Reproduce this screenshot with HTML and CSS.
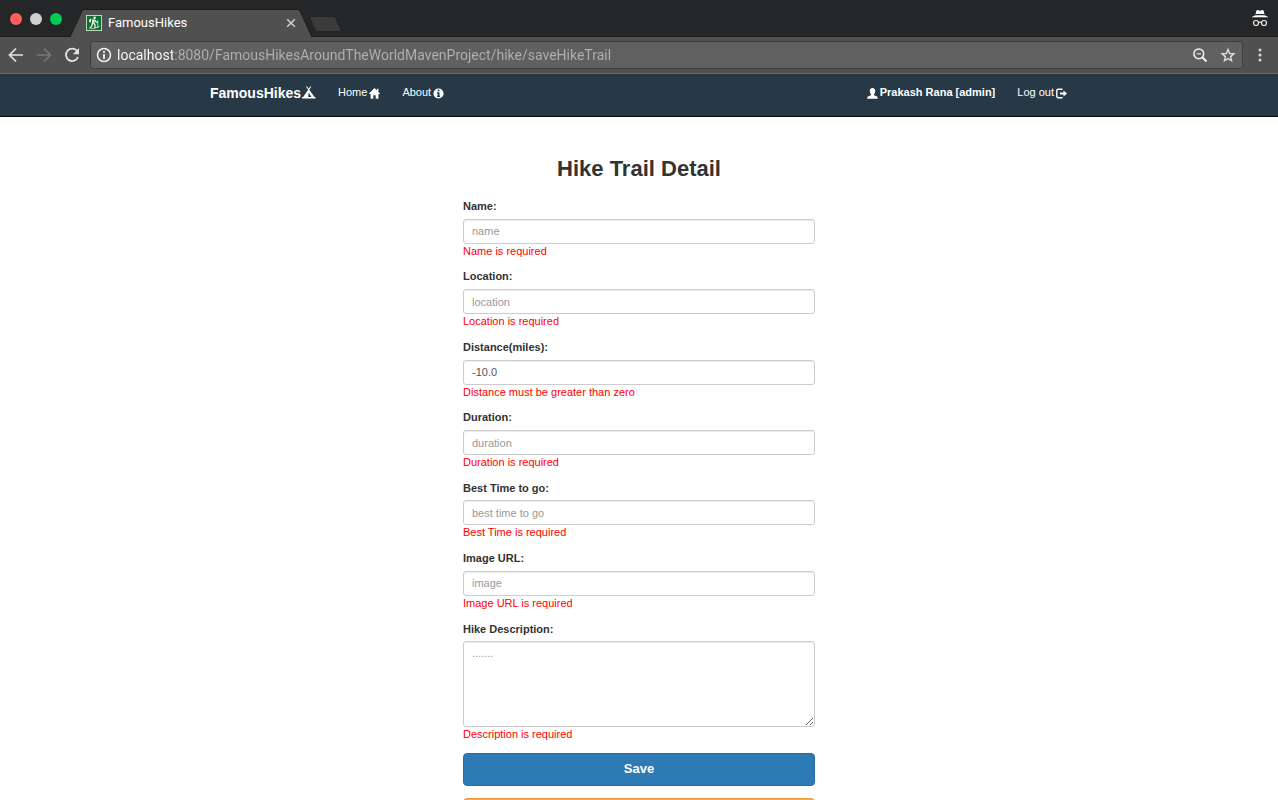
FILE: index.html
```html
<!DOCTYPE html>
<html lang="en">
<head>
<meta charset="utf-8">
<meta name="viewport" content="width=device-width, initial-scale=1">
<title>FamousHikes</title>
<link rel="stylesheet" href="styles.css">
</head>
<body>
<div class="window">
  <header class="tabstrip">
    <div class="lights">
      <button class="light light-close" aria-label="Close window"></button>
      <button class="light light-min" aria-label="Minimize window"></button>
      <button class="light light-max" aria-label="Maximize window"></button>
    </div>
    <div class="tab">
      <svg class="tab-shape" viewBox="0 0 243 28" preserveAspectRatio="none" aria-hidden="true"><path d="M0 28 12 2Q13 .5 15 .5H227Q229 .5 230 2L242 28" fill="#505050" stroke="#191a1b"/></svg>
      <svg class="favicon" viewBox="0 0 16 16" aria-hidden="true">
        <path d="M0 0h16v16H0z" fill="#e8f0dc"/><path d="M.8.800h14.400v14.400H.8z" fill="#0a6e35"/>
        <circle cx="8.600" cy="2.900" r="1.300" fill="#eef3dd"/>
        <path d="M3.600 4 5.400 3.500 4.800 7.500 3 7z" fill="#eef3dd"/>
        <path d="M6.300 4.300 8.800 4.600 8.200 8.500 6 8.500z" fill="#eef3dd"/>
        <path d="M8.500 5 10 7l2 .3M7.800 8 9 10v3M6.500 8 5.800 11 3.500 13.500" fill="none" stroke="#eef3dd" stroke-width="1.300"/>
        <path d="M11.800 5.500V12M5 14 12.500 12.200 13.500 10.800" fill="none" stroke="#eef3dd" stroke-width=".8"/>
      </svg>
      <span class="tab-title">FamousHikes</span>
      <button class="icon-btn tab-close" aria-label="Close tab"><svg viewBox="0 0 10 10" width="10" height="10"><path d="m1.200 1.200 7.600 7.600m0-7.600L1.200 8.800" stroke="#d0d0d0" stroke-width="1.500"/></svg></button>
    </div>
    <button class="icon-btn new-tab" aria-label="New tab"><svg viewBox="0 0 34 17" width="34" height="17"><path d="M2 .5H24Q26 .5 27 2.500L32 14Q32.500 15.500 31 15.500H9Q7 15.500 6 13.500L1 2Q.5 .5 2 .5" fill="#3b3b3b" stroke="#242526"/></svg></button>
    <svg class="incognito" viewBox="0 0 18 18" width="18" height="18" aria-label="Incognito">
      <path d="M5.500 1.500 6.300 1l2.700.7 2.700-.7.8.5 1 3.500h-9zM4 6.300h10l.3.400Q17 7.200 17.500 8.200H.5Q1 7.200 3.700 6.700z" fill="#fff"/>
      <circle cx="5" cy="14" r="2.500" fill="none" stroke="#e8e8e8" stroke-width="1.200"/><circle cx="13" cy="14" r="2.500" fill="none" stroke="#e8e8e8" stroke-width="1.200"/><path d="M7.500 13.500q1.500-.9 3 0" fill="none" stroke="#e8e8e8" stroke-width="1.200"/>
    </svg>
  </header>
  <div class="toolbar">
    <button class="icon-btn" aria-label="Back"><svg viewBox="0 0 16 16" width="16" height="16"><path d="M15 8H2M8 1.500 1.500 8 8 14.500" fill="none" stroke="#e4e4e4" stroke-width="1.700"/></svg></button>
    <button class="icon-btn" aria-label="Forward"><svg viewBox="0 0 16 16" width="16" height="16"><path d="M1 8h13M8 1.500 14.500 8 8 14.500" fill="none" stroke="#777" stroke-width="1.700"/></svg></button>
    <button class="icon-btn" aria-label="Reload"><svg viewBox="0 0 16 16" width="16" height="16"><path d="M13.200 4.200A6.200 6.200 0 1 0 14 10" fill="none" stroke="#e4e4e4" stroke-width="1.800"/><path d="M15 1v6.200H8.800z" fill="#e4e4e4"/></svg></button>
    <div class="omnibox">
      <svg viewBox="0 0 16 16" width="16" height="16" aria-hidden="true"><circle cx="8" cy="8" r="6.500" fill="none" stroke="#f2f2f2" stroke-width="1.500"/><path d="M7.100 7h1.800v5H7.100zM7.100 4h1.800v1.800H7.100z" fill="#f2f2f2"/></svg>
      <input class="url" type="text" aria-label="Address" value="localhost:8080/FamousHikesAroundTheWorldMavenProject/hike/saveHikeTrail">
      <button class="icon-btn" aria-label="Zoom"><svg viewBox="0 0 16 16" width="16" height="16"><circle cx="6.800" cy="6.800" r="4.900" fill="none" stroke="#f2f2f2" stroke-width="1.500"/><path d="m10.300 10.300 4.200 4.200" stroke="#f2f2f2" stroke-width="2"/><path d="M4.500 6.800h4.600" stroke="#d8d8d8" stroke-width="1.200"/></svg></button>
      <button class="icon-btn" aria-label="Bookmark"><svg viewBox="0 0 16 16" width="16" height="16"><path d="m8 2.500 1.600 4 4.300.3-3.300 2.800 1 4.200L8 11.600l-3.600 2.200 1-4.200-3.300-2.800 4.300-.3z" fill="none" stroke="#dcdcdc" stroke-width="1.400"/></svg></button>
    </div>
    <button class="icon-btn" aria-label="Menu"><svg viewBox="0 0 4 16" width="4" height="16"><g fill="#d8d8d8"><circle cx="2" cy="3" r="1.500"/><circle cx="2" cy="8" r="1.500"/><circle cx="2" cy="13" r="1.500"/></g></svg></button>
  </div>
  <div class="page">
    <nav class="navbar">
      <div class="container">
        <a class="brand" href="#">FamousHikes <svg viewBox="0 0 14 14" width="14" height="14" aria-hidden="true"><path d="M5 .2 6.700 2.700 8.400.2l.8.500-1.900 3L12.400 11H13.500v1.500H0V11h1.200L6.100 3.700l-1.900-3zM6.700 6.500 6.200 11h3.300z" fill="#fff" fill-rule="evenodd"/></svg></a>
        <a class="nav-link" href="#">Home <svg viewBox="0 0 11 11" width="11" height="11" aria-hidden="true"><path d="M5.500 0 7.900 2.400V.8h1.500V3.900L11 5.500l-.5.600H9.400v4.700H6.700V7.300H4.300v3.500H1.600V6.100H.5L0 5.500z" fill="#fff"/></svg></a>
        <a class="nav-link" href="#">About <svg viewBox="0 0 11 11" width="11" height="11" aria-hidden="true"><path d="M5.500.4a5.100 5.100 0 1 0 0 10.200 5.100 5.100 0 0 0 0-10.200zM4.500 1.800h2v1.500h-2zM4 4.300h2.500v3.500H7.200V9H4V7.800h.6V5.500H4z" fill="#fff" fill-rule="evenodd"/></svg></a>
        <div class="nav-right">
          <a class="nav-link user" href="#"><svg viewBox="0 0 11 11" width="11" height="11" aria-hidden="true"><path d="M5.500 0C7.500 0 8.200 1.400 8.200 3c0 1.600-.6 2.500-1.200 3.200v.9c.3.600 3.700 1 3.700 2.700v.9H.3v-.9c0-1.700 3.400-2.100 3.700-2.700v-.9C3.400 5.500 2.800 4.600 2.800 3 2.800 1.400 3.500 0 5.500 0z" fill="#fff"/></svg> Prakash Rana [admin]</a>
          <a class="nav-link" href="#">Log out <svg viewBox="0 0 11 11" width="11" height="11" aria-hidden="true"><path d="M6.500 1.200H2.300Q.8 1.200.8 2.700v5.600Q.8 9.800 2.300 9.800H6.500" fill="none" stroke="#fff" stroke-width="1.400"/><path d="M7.500 2.500 11 5.500l-3.500 3V6.500H4v-2h3.500z" fill="#fff"/></svg></a>
        </div>
      </div>
    </nav>
    <main class="content">
      <h1 class="title">Hike Trail Detail</h1>
      <form class="form">
        <div class="field"><label for="name">Name:</label><input class="control" id="name" type="text" placeholder="name"><span class="error">Name is required</span></div>
        <div class="field"><label for="location">Location:</label><input class="control" id="location" type="text" placeholder="location"><span class="error">Location is required</span></div>
        <div class="field"><label for="distance">Distance(miles):</label><input class="control" id="distance" type="text" value="-10.0"><span class="error">Distance must be greater than zero</span></div>
        <div class="field"><label for="duration">Duration:</label><input class="control" id="duration" type="text" placeholder="duration"><span class="error">Duration is required</span></div>
        <div class="field"><label for="besttime">Best Time to go:</label><input class="control" id="besttime" type="text" placeholder="best time to go"><span class="error">Best Time is required</span></div>
        <div class="field"><label for="image">Image URL:</label><input class="control" id="image" type="text" placeholder="image"><span class="error">Image URL is required</span></div>
        <div class="field"><label for="description">Hike Description:</label><textarea class="control description" id="description" placeholder="......."></textarea><span class="error">Description is required</span></div>
        <button class="btn btn-primary" type="button">Save</button>
        <button class="btn btn-warning" type="button" aria-label="Cancel"></button>
      </form>
    </main>
  </div>
</div>
</body>
</html>
```
FILE: styles.css
```css
* { box-sizing: border-box; }
body { margin: 0; background: #fff; color: #333; font-family: "Liberation Sans", Arial, sans-serif; font-size: 11px; line-height: 1.43; }
button, input, textarea { font: inherit; }
svg { display: block; flex: none; }
.window { display: flex; flex-direction: column; height: 100vh; }

.tabstrip { display: flex; align-items: flex-end; flex: none; height: 37px; padding: 0 9px; background: #242628; border-bottom: 1px solid #1b1c1d; }
.lights { display: flex; gap: 8px; padding: 0 8px 11px 1px; }
.light { width: 12px; height: 12px; padding: 0; border: 0; border-radius: 50%; }
.light-close { background: #ff5f5a; }
.light-min { background: #d0d0d0; }
.light-max { background: #00cb55; }
.tab { position: relative; display: flex; align-items: center; gap: 6px; width: 243px; height: 28px; padding: 0 17px 0 16px; margin-bottom: -1px; color: #fff; font: 12px/16px Roboto, sans-serif; font-size: 13px; }
.tab-shape { position: absolute; inset: 0; width: 100%; height: 100%; }
.favicon, .tab-title, .tab-close { position: relative; }
.favicon { width: 16px; height: 16px; }
.tab-close { margin-left: auto; }
.icon-btn { display: flex; align-items: center; justify-content: center; padding: 0; border: 0; background: none; }
.new-tab { margin-left: -4px; padding-bottom: 3px; }
.incognito { margin: 0 0 9px auto; }

.toolbar { display: flex; align-items: center; gap: 12px; flex: none; height: 37px; padding: 0 16px 0 8px; background: #505050; border-bottom: 1px solid #686868; }
.omnibox { display: flex; align-items: center; gap: 12px; flex: 1; height: 28px; padding: 0 6px 0 5px; margin: 0 3px 0 -2px; background: #606060; border: 1px solid #3e3e3e; border-radius: 3px; }
.url { flex: 1; min-width: 0; height: 26px; padding: 0; margin-left: -7px; border: 0; outline: 0; font: 14px/26px Roboto, sans-serif; color: transparent; background: linear-gradient(90deg, #fff 56px, #b0b0b0 56px); -webkit-background-clip: text; background-clip: text; }

.page { flex: 1; min-height: 0; overflow-y: auto; scrollbar-width: none; }
.navbar { background: #273947; border-bottom: 1px solid #080808; }
.container { display: flex; align-items: center; width: 100%; max-width: 858px; height: 42px; padding-bottom: 4px; margin: 0 auto; }
.brand, .nav-link { display: flex; align-items: center; color: #fff; text-decoration: none; white-space: nowrap; }
.brand { gap: 1px; margin-right: 22px; font-size: 14px; font-weight: bold; }
.nav-link { gap: 2px; margin-right: 22px; }
.nav-right { display: flex; margin-left: auto; }
.nav-right .nav-link:last-child { margin-right: 1px; }
.user { font-weight: bold; }

.content { width: 100%; max-width: 352px; margin: 0 auto; padding: 38px 0 12px; }
.title { margin: 0 0 16px; font-size: 22px; font-weight: bold; line-height: 28px; text-align: center; }
.form { display: flex; flex-direction: column; }
.field { display: flex; flex-direction: column; margin-bottom: 10px; }
.field label { margin-bottom: 4px; font-weight: bold; }
.control { display: block; width: 100%; height: 25px; padding: 4px 8px; border: 1px solid #ccc; border-radius: 3px; background: #fff; color: #555; box-shadow: inset 0 1px 1px rgba(0, 0, 0, .075); }
.control::placeholder { color: #999; opacity: 1; }
.description { height: 86px; resize: vertical; }
.error { color: #f00; }
.btn { height: 33px; padding: 0; border: 1px solid; border-radius: 4px; color: #fff; font-size: 13px; font-weight: bold; }
.btn-primary { margin: 0 0 12px; background: #2e7ab4; border-color: #2a6ca2; }
.btn-warning { background: #f0ad4e; border-color: #f09a3c; }
```
